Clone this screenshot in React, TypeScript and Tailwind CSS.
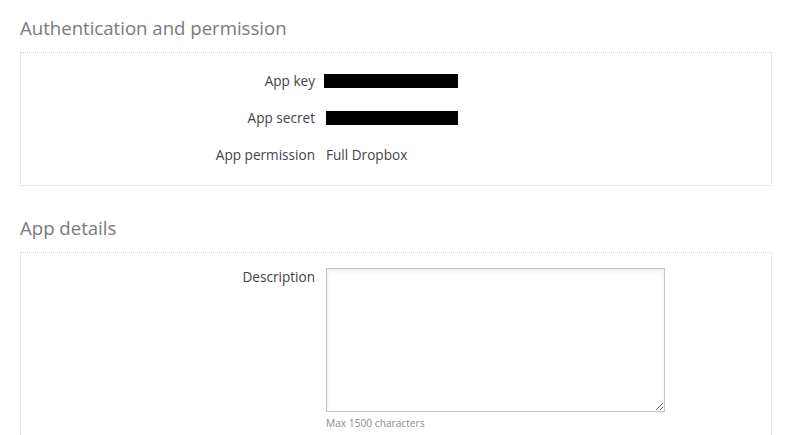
export default function App() {
  const font = { fontFamily: '"Open Sans", "Noto Sans", sans-serif' };

  return (
    <div className="min-h-[435px] bg-white px-5 pt-[14px]" style={font}>
      <h2 className="text-[18.6px] leading-[28px] text-[#7a7a7a] mb-[10px]">Authentication and permission</h2>
      <div className="w-[752px] border border-dotted border-[#d4d4d4] pt-[17px] pb-[19px]">
        <div className="flex flex-col gap-[15px]">
          <div className="flex items-center h-[22px]">
            <div className="w-[294px] text-right text-[13.6px] text-[#444]">App key</div>
            <div className="ml-[9px] h-[14px] w-[134px] bg-black" />
          </div>
          <div className="flex items-center h-[22px]">
            <div className="w-[294px] text-right text-[13.6px] text-[#444]">App secret</div>
            <div className="ml-[11px] h-[14px] w-[132px] bg-black" />
          </div>
          <div className="flex items-center h-[22px]">
            <div className="w-[294px] text-right text-[13.6px] text-[#444]">App permission</div>
            <div className="ml-[11px] text-[13.6px] text-[#444]">Full Dropbox</div>
          </div>
        </div>
      </div>

      <h2 className="mt-[28px] text-[18.6px] leading-[28px] text-[#7a7a7a] mb-[10px]">App details</h2>
      <div className="w-[752px] border border-dotted border-[#d4d4d4] pt-[15px] pb-[20px]">
        <div className="flex items-start">
          <div className="w-[294px] text-right text-[13.6px] leading-[18px] text-[#444]">Description</div>
          <div className="ml-[11px]">
            <textarea className="block h-[144px] w-[339px] border border-[#c4c4c4] bg-white shadow-[inset_0_2px_4px_rgba(0,0,0,0.08)] outline-none" />
            <div className="mt-[4px] text-[10.2px] leading-[14px] text-[#8a8a8a]">Max 1500 characters</div>
          </div>
        </div>
      </div>
    </div>
  );
}
